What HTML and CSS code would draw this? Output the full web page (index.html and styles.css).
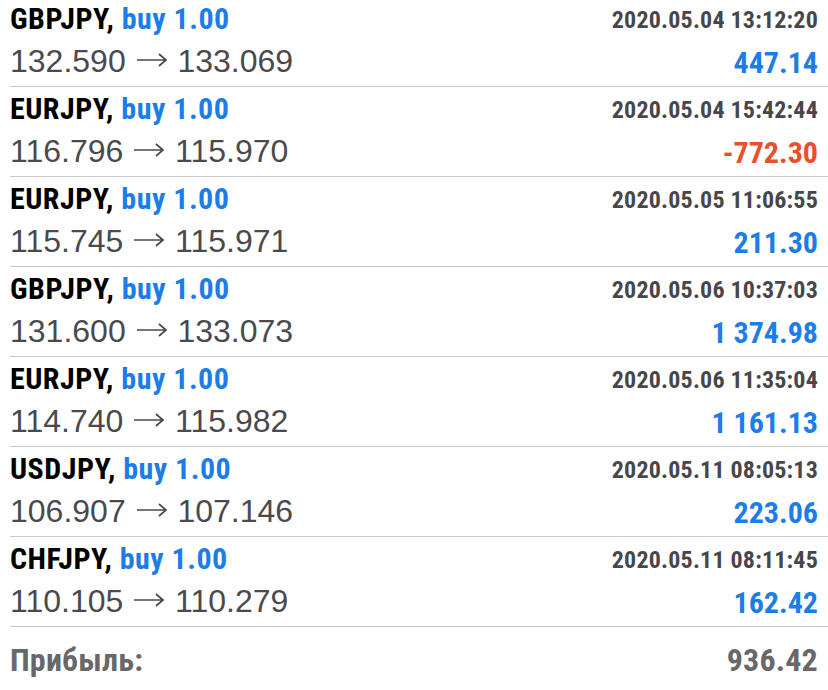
FILE: index.html
```html
<!DOCTYPE html>
<html>
<head>
<meta charset="utf-8">
<link rel="stylesheet" href="styles.css">
</head>
<body>
<div class="list">
  <div class="row">
    <div class="col">
      <div class="title">GBPJPY, <span class="buy">buy 1.00</span></div>
      <div class="price">132.590 <svg class="arrow" viewBox="0 0 32 14" width="32" height="14"><path d="M1 7H30M23 1L30 7L23 13"/></svg> 133.069</div>
    </div>
    <div class="col right">
      <div class="date">2020.05.04 13:12:20</div>
      <div class="profit">447.14</div>
    </div>
  </div>
  <div class="row">
    <div class="col">
      <div class="title">EURJPY, <span class="buy">buy 1.00</span></div>
      <div class="price">116.796 <svg class="arrow" viewBox="0 0 32 14" width="32" height="14"><path d="M1 7H30M23 1L30 7L23 13"/></svg> 115.970</div>
    </div>
    <div class="col right">
      <div class="date">2020.05.04 15:42:44</div>
      <div class="profit loss">-772.30</div>
    </div>
  </div>
  <div class="row">
    <div class="col">
      <div class="title">EURJPY, <span class="buy">buy 1.00</span></div>
      <div class="price">115.745 <svg class="arrow" viewBox="0 0 32 14" width="32" height="14"><path d="M1 7H30M23 1L30 7L23 13"/></svg> 115.971</div>
    </div>
    <div class="col right">
      <div class="date">2020.05.05 11:06:55</div>
      <div class="profit">211.30</div>
    </div>
  </div>
  <div class="row">
    <div class="col">
      <div class="title">GBPJPY, <span class="buy">buy 1.00</span></div>
      <div class="price">131.600 <svg class="arrow" viewBox="0 0 32 14" width="32" height="14"><path d="M1 7H30M23 1L30 7L23 13"/></svg> 133.073</div>
    </div>
    <div class="col right">
      <div class="date">2020.05.06 10:37:03</div>
      <div class="profit">1 374.98</div>
    </div>
  </div>
  <div class="row">
    <div class="col">
      <div class="title">EURJPY, <span class="buy">buy 1.00</span></div>
      <div class="price">114.740 <svg class="arrow" viewBox="0 0 32 14" width="32" height="14"><path d="M1 7H30M23 1L30 7L23 13"/></svg> 115.982</div>
    </div>
    <div class="col right">
      <div class="date">2020.05.06 11:35:04</div>
      <div class="profit">1 161.13</div>
    </div>
  </div>
  <div class="row">
    <div class="col">
      <div class="title">USDJPY, <span class="buy">buy 1.00</span></div>
      <div class="price">106.907 <svg class="arrow" viewBox="0 0 32 14" width="32" height="14"><path d="M1 7H30M23 1L30 7L23 13"/></svg> 107.146</div>
    </div>
    <div class="col right">
      <div class="date">2020.05.11 08:05:13</div>
      <div class="profit">223.06</div>
    </div>
  </div>
  <div class="row">
    <div class="col">
      <div class="title">CHFJPY, <span class="buy">buy 1.00</span></div>
      <div class="price">110.105 <svg class="arrow" viewBox="0 0 32 14" width="32" height="14"><path d="M1 7H30M23 1L30 7L23 13"/></svg> 110.279</div>
    </div>
    <div class="col right">
      <div class="date">2020.05.11 08:11:45</div>
      <div class="profit">162.42</div>
    </div>
  </div>
  <div class="total">
    <div class="total-label">Прибыль:</div>
    <div class="total-value">936.42</div>
  </div>
</div>
</body>
</html>
```
FILE: styles.css
```css
html, body {
  margin: 0;
  padding: 0;
  background: #ffffff;
}
body {
  width: 828px;
  height: 690px;
  overflow: hidden;
}
.list {
  margin-top: -3px;
  margin-left: 10px;
}
.row {
  display: flex;
  justify-content: space-between;
  height: 89px;
  border-bottom: 1px solid #c8c8cb;
  padding-right: 10px;
  white-space: nowrap;
}
.col {
  display: flex;
  flex-direction: column;
  padding-top: 3px;
}
.right {
  align-items: flex-end;
}
.title {
  font-family: "Roboto Condensed", "Roboto", sans-serif;
  font-weight: bold;
  font-size: 30px;
  letter-spacing: 0.5px;
  line-height: 38px;
  color: #000;
}
.buy {
  color: #1d7de8;
}
.price {
  font-family: "Liberation Sans", Arial, sans-serif;
  font-size: 32px;
  line-height: 46px;
  color: #4a4a4e;
}
.arrow {
  fill: none;
  stroke: #4a4a4e;
  stroke-width: 1.7;
  vertical-align: 5px;
  margin: 0 1px;
}
.date {
  font-family: "Roboto Condensed", "Roboto", sans-serif;
  font-weight: bold;
  font-size: 24px;
  letter-spacing: 0.2px;
  line-height: 40px;
  color: #47474b;
}
.profit {
  font-family: "Roboto Condensed", "Roboto", sans-serif;
  font-weight: bold;
  font-size: 30px;
  letter-spacing: 0;
  line-height: 45px;
  color: #1d7de8;
}
.profit.loss {
  color: #e8502b;
}
.total {
  display: flex;
  justify-content: space-between;
  padding-right: 10px;
  padding-top: 9px;
}
.total-label, .total-value {
  font-family: "Roboto Condensed", "Roboto", sans-serif;
  font-weight: bold;
  font-size: 32px;
  letter-spacing: 0.2px;
  line-height: 48px;
  color: #68686a;
}
```
